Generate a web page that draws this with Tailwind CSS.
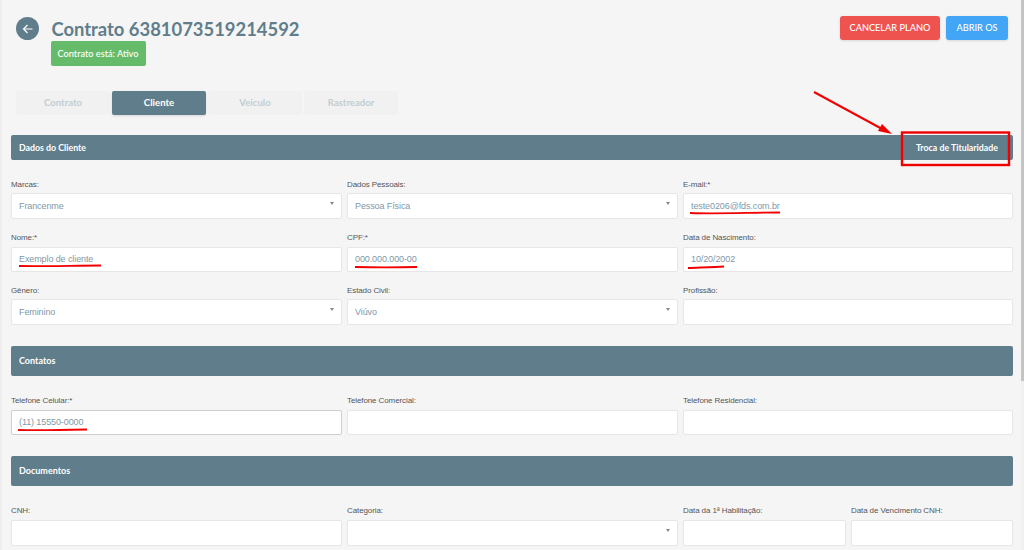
<!DOCTYPE html>
<html lang="pt-BR">
<head>
  <meta charset="UTF-8" />
  <title>Contrato 6381073519214592</title>
  <script src="https://cdn.jsdelivr.net/npm/@tailwindcss/browser@4"></script>
</head>
<body class="relative h-[550px] w-[1024px] overflow-hidden bg-[#f5f5f5] font-['Liberation_Sans',sans-serif] text-[#7f99a7]">
  <!-- Scrollbar -->
  <div class="absolute right-0 top-0 h-[550px] w-[3px] bg-[#f0f0f0]"><div class="h-[381px] w-[3px] bg-[#c4c4c4]"></div></div>
  <div class="absolute left-0 top-0 h-[550px] w-[2px] bg-[#eeeeee]"></div>

  <main class="w-[1013px] pl-[11px]">
    <!-- Header -->
    <header class="flex h-[91px] items-start justify-between">
      <div class="flex pl-[5px] pt-[17px]">
        <div class="flex h-[23px] w-[23px] items-center justify-center rounded-full bg-[#607d8b]">
          <svg width="12" height="12" viewBox="0 0 24 24" fill="none" stroke="#ffffff" stroke-width="2.4"><path d="M21 12H3M11 4l-8 8 8 8" /></svg>
        </div>
        <div class="ml-[12.5px]">
          <h1 class="mt-[1px] font-['Lato',sans-serif] text-[18.4px] font-bold leading-[22px] text-[#607d8b]">Contrato 6381073519214592</h1>
          <div class="ml-[-1px] mt-[1px] flex h-[25px] w-[95px] items-center justify-center rounded-[2px] bg-[#66bb6a] font-['Lato',sans-serif] text-[9.2px] font-medium text-white">Contrato está: Ativo</div>
        </div>
      </div>
      <div class="flex gap-[6px] pr-[5px] pt-[16px] font-['Lato',sans-serif] text-[9.2px] font-medium text-white">
        <button class="h-[24px] w-[100px] rounded-[3px] bg-[#ef5350] shadow-sm">CANCELAR PLANO</button>
        <button class="h-[24px] w-[62px] rounded-[3px] bg-[#42a5f5] shadow-sm">ABRIR OS</button>
      </div>
    </header>

    <!-- Tabs -->
    <nav class="flex gap-[2px] pl-[5px] font-['Lato',sans-serif] text-[9.6px] font-bold text-[#c3cdd2]">
      <div class="flex h-[24px] w-[94px] items-center justify-center rounded-[2px] bg-[#f1f1f1]">Contrato</div>
      <div class="flex h-[24px] w-[94px] items-center justify-center rounded-[2px] bg-[#607d8b] text-white shadow-sm">Cliente</div>
      <div class="flex h-[24px] w-[94px] items-center justify-center rounded-[2px] bg-[#f1f1f1]">Veículo</div>
      <div class="flex h-[24px] w-[94px] items-center justify-center rounded-[2px] bg-[#f1f1f1]">Rastreador</div>
    </nav>

    <!-- Dados do Cliente -->
    <section class="mt-[20px] flex h-[25px] items-center justify-between rounded-[2px] bg-[#607d8b] pl-[8px] pr-[15px] font-['Lato',sans-serif] text-[8.8px] font-bold text-white">
      <span>Dados do Cliente</span>
      <span>Troca de Titularidade</span>
    </section>

    <div class="mt-[20px] grid grid-cols-[331px_331px_330px] gap-x-[5px] gap-y-[14px] text-[9px] tracking-[-0.1px]">
      <div>
        <label class="block h-[13px] text-[8px] leading-[10px] text-[#555555]">Marcas:</label>
        <div class="relative flex h-[26px] items-center rounded-[2px] border border-[#e6e6e6] bg-white pl-[7px] pt-[1px]">Francenme<span class="absolute right-[7px] top-[8px] h-0 w-0 border-x-[2px] border-t-[3px] border-x-transparent border-t-[#888888]"></span></div>
      </div>
      <div>
        <label class="block h-[13px] text-[8px] leading-[10px] text-[#555555]">Dados Pessoais:</label>
        <div class="relative flex h-[26px] items-center rounded-[2px] border border-[#e6e6e6] bg-white pl-[7px] pt-[1px]">Pessoa Física<span class="absolute right-[7px] top-[8px] h-0 w-0 border-x-[2px] border-t-[3px] border-x-transparent border-t-[#888888]"></span></div>
      </div>
      <div>
        <label class="block h-[13px] text-[8px] leading-[10px] text-[#555555]">E-mail:*</label>
        <div class="flex h-[26px] items-center rounded-[2px] border border-[#e6e6e6] bg-white pl-[7px] pt-[1px]">teste0206@fds.com.br</div>
      </div>

      <div>
        <label class="block h-[14px] text-[8px] leading-[9px] text-[#555555]">Nome:*</label>
        <div class="flex h-[25px] items-center rounded-[2px] border border-[#e6e6e6] bg-white pl-[7px]">Exemplo de cliente</div>
      </div>
      <div>
        <label class="block h-[14px] text-[8px] leading-[9px] text-[#555555]">CPF:*</label>
        <div class="flex h-[25px] items-center rounded-[2px] border border-[#e6e6e6] bg-white pl-[7px]">000.000.000-00</div>
      </div>
      <div>
        <label class="block h-[14px] text-[8px] leading-[9px] text-[#555555]">Data de Nascimento:</label>
        <div class="flex h-[25px] items-center rounded-[2px] border border-[#e6e6e6] bg-white pl-[7px]">10/20/2002</div>
      </div>

      <div>
        <label class="block h-[13px] text-[8px] leading-[9px] text-[#555555]">Gênero:</label>
        <div class="relative flex h-[26px] items-center rounded-[2px] border border-[#e6e6e6] bg-white pl-[7px] pt-[1px]">Feminino<span class="absolute right-[7px] top-[8px] h-0 w-0 border-x-[2px] border-t-[3px] border-x-transparent border-t-[#888888]"></span></div>
      </div>
      <div>
        <label class="block h-[13px] text-[8px] leading-[9px] text-[#555555]">Estado Civil:</label>
        <div class="relative flex h-[26px] items-center rounded-[2px] border border-[#e6e6e6] bg-white pl-[7px] pt-[1px]">Viúvo<span class="absolute right-[7px] top-[8px] h-0 w-0 border-x-[2px] border-t-[3px] border-x-transparent border-t-[#888888]"></span></div>
      </div>
      <div>
        <label class="block h-[13px] text-[8px] leading-[9px] text-[#555555]">Profissão:</label>
        <div class="h-[26px] rounded-[2px] border border-[#e6e6e6] bg-white"></div>
      </div>
    </div>

    <!-- Contatos -->
    <section class="mt-[21px] flex h-[30px] items-center rounded-[2px] bg-[#607d8b] pl-[8px] font-['Lato',sans-serif] text-[9px] font-bold text-white">Contatos</section>

    <div class="mt-[18px] grid grid-cols-[331px_331px_330px] gap-x-[5px] text-[9px] tracking-[-0.1px]">
      <div>
        <label class="block h-[16px] text-[8px] leading-[13px] text-[#555555]">Telefone Celular:*</label>
        <div class="flex h-[25px] items-center rounded-[2px] border border-[#cfcfcf] bg-white pl-[7px]">(11) 15550-0000</div>
      </div>
      <div>
        <label class="block h-[16px] text-[8px] leading-[13px] text-[#555555]">Telefone Comercial:</label>
        <div class="h-[25px] rounded-[2px] border border-[#e6e6e6] bg-white"></div>
      </div>
      <div>
        <label class="block h-[16px] text-[8px] leading-[13px] text-[#555555]">Telefone Residencial:</label>
        <div class="h-[25px] rounded-[2px] border border-[#e6e6e6] bg-white"></div>
      </div>
    </div>

    <!-- Documentos -->
    <section class="mt-[21px] flex h-[30px] items-center rounded-[2px] bg-[#607d8b] pl-[8px] font-['Lato',sans-serif] text-[9px] font-bold text-white">Documentos</section>

    <div class="mt-[19px] grid grid-cols-[331px_331px_330px] gap-x-[5px] text-[9px] tracking-[-0.1px]">
      <div>
        <label class="block h-[15px] text-[8px] leading-[12px] text-[#555555]">CNH:</label>
        <div class="h-[26px] rounded-[2px] border border-[#e6e6e6] bg-white"></div>
      </div>
      <div>
        <label class="block h-[15px] text-[8px] leading-[12px] text-[#555555]">Categoria:</label>
        <div class="relative h-[26px] rounded-[2px] border border-[#e6e6e6] bg-white"><span class="absolute right-[7px] top-[8px] h-0 w-0 border-x-[2px] border-t-[3px] border-x-transparent border-t-[#888888]"></span></div>
      </div>
      <div class="grid grid-cols-[163px_162px] gap-x-[5px]">
        <div>
          <label class="block h-[15px] text-[8px] leading-[12px] text-[#555555]">Data da 1ª Habilitação:</label>
          <div class="h-[26px] rounded-[2px] border border-[#e6e6e6] bg-white"></div>
        </div>
        <div>
          <label class="block h-[15px] text-[8px] leading-[12px] text-[#555555]">Data de Vencimento CNH:</label>
          <div class="h-[26px] rounded-[2px] border border-[#e6e6e6] bg-white"></div>
        </div>
      </div>
    </div>
  </main>

  <!-- Red annotations drawn over the screenshot -->
  <svg class="pointer-events-none absolute left-0 top-0" width="1024" height="550" fill="none" stroke="#f00000">
    <rect x="902" y="132.5" width="107" height="32.5" stroke-width="2.4" />
    <path d="M814 92L884 130" stroke-width="2" />
    <path d="M892 134L878 131L882 124Z" fill="#f00000" stroke="none" />
    <path d="M19 266C45 266.500 75 265.500 101 265.500" stroke-width="1.800" />
    <path d="M355 267C375 267.500 395 267.500 417 267" stroke-width="1.800" />
    <path d="M690 213C720 214 750 212.500 780 212.500" stroke-width="1.800" />
    <path d="M688 268C700 267.500 715 267 724 266.500" stroke-width="1.800" />
    <path d="M18 430C40 430.500 65 430 87 429.500" stroke-width="1.800" />
  </svg>
</body>
</html>
